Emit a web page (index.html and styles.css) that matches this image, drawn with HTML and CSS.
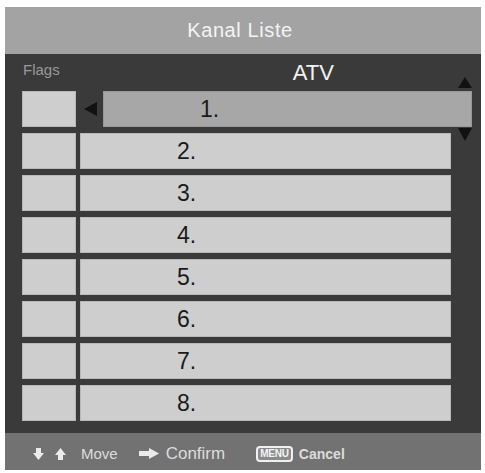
FILE: index.html
```html
<!DOCTYPE html>
<html>
<head>
<meta charset="utf-8">
<link rel="stylesheet" href="styles.css">
</head>
<body>
<div class="panel">
  <div class="title">Kanal Liste</div>
  <div class="main">
    <div class="head">
      <span class="flags">Flags</span>
      <span class="atv">ATV</span>
    </div>
    <div class="rows">
      <div class="row sel">
        <div class="flag"></div>
        <div class="pointer"><svg width="13" height="14" viewBox="0 0 13 14"><polygon points="13,0 13,14 0,7" fill="#111"/></svg></div>
        <div class="name">1.</div>
      </div>
      <div class="row"><div class="flag"></div><div class="name">2.</div></div>
      <div class="row"><div class="flag"></div><div class="name">3.</div></div>
      <div class="row"><div class="flag"></div><div class="name">4.</div></div>
      <div class="row"><div class="flag"></div><div class="name">5.</div></div>
      <div class="row"><div class="flag"></div><div class="name">6.</div></div>
      <div class="row"><div class="flag"></div><div class="name">7.</div></div>
      <div class="row"><div class="flag"></div><div class="name">8.</div></div>
    </div>
    <svg class="scroll-up" width="14" height="11" viewBox="0 0 14 11"><polygon points="7,0 14,11 0,11" fill="#111"/></svg>
    <svg class="scroll-down" width="14" height="13" viewBox="0 0 14 13"><polygon points="0,0 14,0 7,13" fill="#111"/></svg>
  </div>
  <div class="footer">
    <svg class="ic-down" width="11" height="12" viewBox="0 0 11 12"><polygon points="3,0 8,0 8,5 11,5 5.5,12 0,5 3,5" fill="#ebebeb"/></svg>
    <svg class="ic-up" width="11" height="12" viewBox="0 0 11 12"><polygon points="5.5,0 11,7 8,7 8,12 3,12 3,7 0,7" fill="#ebebeb"/></svg>
    <span class="move">Move</span>
    <svg class="ic-right" width="20" height="11" viewBox="0 0 20 11"><polygon points="0,3 10,3 10,0 20,5.5 10,11 10,8 0,8" fill="#ebebeb"/></svg>
    <span class="confirm">Confirm</span>
    <span class="menu">MENU</span>
    <span class="cancel">Cancel</span>
  </div>
</div>
</body>
</html>
```
FILE: styles.css
```css
html, body {
  margin: 0;
  padding: 0;
  background: #ffffff;
}
body {
  font-family: "Liberation Sans", Arial, sans-serif;
}
.panel {
  width: 476px;
  margin: 7px 0 0 5px;
  display: flex;
  flex-direction: column;
}
.title {
  height: 47px;
  background: #a3a3a3;
  color: #f4f4f4;
  font-size: 20px;
  letter-spacing: 0.6px;
  display: flex;
  align-items: center;
  justify-content: center;
  padding-right: 6px;
}
.main {
  position: relative;
  height: 379px;
  box-sizing: border-box;
  background: #3a3a3a;
  padding: 0 9px 0 17px;
}
.head {
  height: 37px;
  display: flex;
  align-items: flex-start;
  padding-top: 7px;
  box-sizing: border-box;
}
.flags {
  margin-left: 1px;
  font-size: 15px;
  color: #999999;
}
.atv {
  margin-left: 233px;
  margin-top: -1px;
  font-size: 22px;
  color: #f2f2f2;
}
.rows {
  display: flex;
  flex-direction: column;
  gap: 6px;
}
.row {
  display: flex;
  height: 36px;
}
.flag {
  width: 54px;
  background: #cecece;
  box-shadow: inset 0 0 0 1px #b8b8b8;
}
.name {
  width: 371px;
  margin-left: 4px;
  background: #cecece;
  box-shadow: inset 0 0 0 1px #b8b8b8;
  box-sizing: border-box;
  padding-left: 97px;
  display: flex;
  align-items: center;
  font-size: 23px;
  color: #1a1a1a;
}
.row.sel .pointer {
  width: 27px;
  display: flex;
  align-items: center;
  padding-left: 8px;
  box-sizing: border-box;
}
.row.sel .name {
  width: 369px;
  margin-left: 0;
  background: #a7a7a7;
  box-shadow: inset 0 0 0 1px #989898;
}
.scroll-up {
  position: absolute;
  left: 453px;
  top: 23px;
}
.scroll-down {
  position: absolute;
  left: 453px;
  top: 74px;
}
.footer {
  height: 37px;
  background: #727272;
  display: flex;
  align-items: center;
  box-sizing: border-box;
  padding: 4px 0 0 28px;
  color: #dcdcdc;
}
.ic-up {
  margin-left: 11px;
}
.move {
  margin-left: 15px;
  font-size: 15px;
}
.ic-right {
  margin-left: 21px;
}
.confirm {
  margin-left: 7px;
  font-size: 17px;
}
.menu {
  margin-left: 31px;
  font-size: 10px;
  font-weight: bold;
  color: #f4f4f4;
  background: #8a8a8a;
  border: 2px solid #f0f0f0;
  border-radius: 4px;
  padding: 0 2px;
  height: 12px;
  line-height: 12px;
  letter-spacing: -0.2px;
}
.cancel {
  margin-left: 6px;
  font-size: 14px;
  font-weight: bold;
}
```
